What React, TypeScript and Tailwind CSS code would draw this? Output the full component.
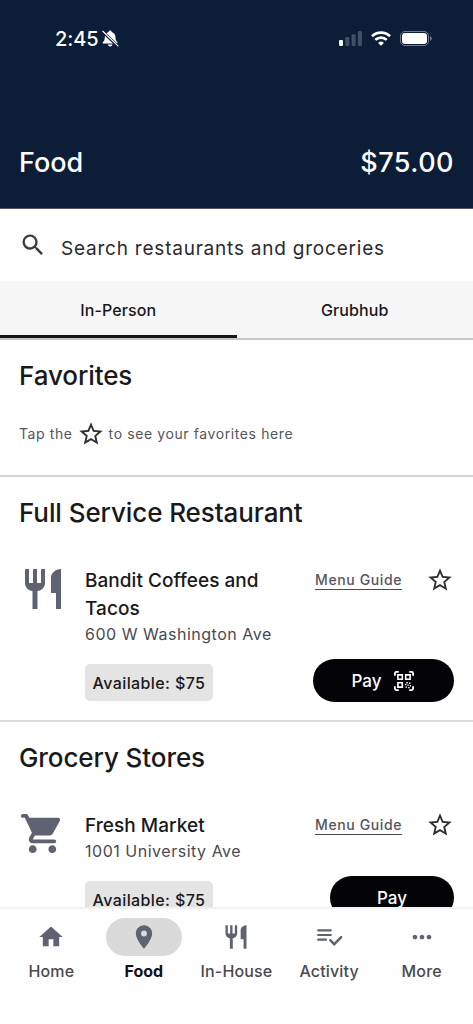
import type { ReactNode } from "react";
import {
  MdHome,
  MdMoreHoriz,
  MdPlace,
  MdRestaurant,
  MdSearch,
  MdStarBorder,
} from "react-icons/md";

interface Venue {
  name: string;
  address: string;
  available: string;
  icon: ReactNode;
  scanToPay?: boolean;
}

interface NavItem {
  label: string;
  icon: ReactNode;
  active?: boolean;
}

function CartIcon() {
  return (
    <svg viewBox="0 0 24 24" fill="currentColor" className="size-[47px]">
      <path d="M7 18c-1.1 0-1.99.9-1.99 2S5.9 22 7 22s2-.9 2-2-.9-2-2-2M1 3c0 .55.45 1 1 1h1l3.6 7.59-1.35 2.44C4.52 15.37 5.48 17 7 17h11c.55 0 1-.45 1-1s-.45-1-1-1H7l1.1-2h7.45c.75 0 1.41-.41 1.75-1.03l3.58-6.49c.37-.66-.11-1.48-.87-1.48H5.21l-.67-1.43c-.16-.35-.52-.57-.9-.57H2c-.55 0-1 .45-1 1m16 15c-1.1 0-1.99.9-1.99 2s.89 2 1.99 2 2-.9 2-2-.9-2-2-2" />
    </svg>
  );
}

function QrIcon() {
  return (
    <svg viewBox="0 0 20 20" fill="none" stroke="currentColor" className="size-5">
      <path
        d="M.9 4.8V2.4A1.5 1.5 0 0 1 2.4.9h2.4M15.2.9h2.4a1.5 1.5 0 0 1 1.5 1.5v2.4M.9 15.2v2.4a1.5 1.5 0 0 0 1.5 1.5h2.4M15.2 19.1h2.4a1.5 1.5 0 0 0 1.5-1.5v-2.4"
        strokeWidth="1.8"
      />
      <path d="M3.9 3.9h4.4v4.4H3.9zM11.7 3.9h4.4v4.4h-4.4zM3.9 11.7h4.4v4.4H3.9z" strokeWidth="1.6" />
      <path
        d="M12.4 11h1.4v1.4h-1.4zM15 11.5h1.4v1.4H15zM11 12.8h1.4v1.4H11zM13.4 13.4h1.4v1.4h-1.4zM15.7 14h1.4v1.4h-1.4zM11.5 15.4h1.4v1.4h-1.4zM14.2 15.9h1.4v1.4h-1.4z"
        fill="currentColor"
        stroke="none"
      />
    </svg>
  );
}

function ActivityIcon() {
  return (
    <svg viewBox="0 0 28 28" fill="none" stroke="currentColor" strokeWidth="2.2" strokeLinecap="round" className="size-7">
      <path d="M3.2 7.3h12.6M3.2 12h12.6M3.2 16.7h7.8" />
      <path d="m15.2 17.2 4 4 7-7" strokeWidth="2.4" />
    </svg>
  );
}

function BellOffIcon() {
  return (
    <svg viewBox="0 0 18 18" fill="currentColor" className="ml-1 size-[17px]">
      <path d="M8.6.6c.9 0 1.5.6 1.6 1.4 2.5.6 3.9 2.5 4 5.1.1 3.1.6 4.1 1.9 5.5.7.8.4 1.7-.7 1.7H1.8c-1.1 0-1.5-.9-.7-1.7C2.5 11.2 3 10.2 3 7.1c.1-2.6 1.5-4.5 4-5.1C7.1 1.2 7.7.6 8.6.6z" />
      <path d="M6.3 15.3H11c-.2 1.3-1.1 2.1-2.3 2.1s-2.2-.8-2.4-2.1z" />
      <path d="m.2 1.2 16.9 16.2" stroke="#0c1d38" strokeWidth="3" />
      <path d="m.9 1.3 16 15.5" stroke="currentColor" strokeWidth="1.2" strokeLinecap="round" />
    </svg>
  );
}

function SignalIcon() {
  return (
    <svg viewBox="0 0 23 15" fill="currentColor" className="h-[15px] w-[23px]">
      <rect x="0" y="9" width="4" height="6" rx="1.2" />
      <g opacity=".22">
        <rect x="6.3" y="6" width="4" height="9" rx="1.2" />
        <rect x="12.6" y="3.2" width="4" height="11.8" rx="1.2" />
        <rect x="18.9" y="0" width="4" height="15" rx="1.2" />
      </g>
    </svg>
  );
}

function WifiIcon() {
  return (
    <svg viewBox="0 0 20 15" fill="none" stroke="currentColor" strokeWidth="2.7" className="h-[15px] w-5">
      <path d="M1 5.3a12.8 12.8 0 0 1 18 0" />
      <path d="M4.3 8.9a8.1 8.1 0 0 1 11.4 0" />
      <path d="m10 14.8-2.9-2.9a4.1 4.1 0 0 1 5.8 0z" fill="currentColor" stroke="none" />
    </svg>
  );
}

function BatteryIcon() {
  return (
    <svg viewBox="0 0 32 15" fill="none" className="h-[15px] w-8">
      <rect x=".5" y=".5" width="28" height="14" rx="4.5" stroke="#fff" strokeOpacity=".42" />
      <rect x="2" y="2" width="25" height="11" rx="3.2" fill="#fff" />
      <path d="M30 5c1 .4 1.7 1.3 1.7 2.5S31 9.6 30 10z" fill="#fff" fillOpacity=".45" />
    </svg>
  );
}

const fullService: Venue = {
  name: "Bandit Coffees and Tacos",
  address: "600 W Washington Ave",
  available: "$75",
  icon: <MdRestaurant className="size-12" />,
  scanToPay: true,
};

const grocery: Venue = {
  name: "Fresh Market",
  address: "1001 University Ave",
  available: "$75",
  icon: <CartIcon />,
};

const navItems: NavItem[] = [
  { label: "Home", icon: <MdHome className="size-7" /> },
  { label: "Food", icon: <MdPlace className="size-7" />, active: true },
  { label: "In-House", icon: <MdRestaurant className="size-7" /> },
  { label: "Activity", icon: <ActivityIcon /> },
  { label: "More", icon: <MdMoreHoriz className="size-7" /> },
];

function SectionTitle({ children }: { children: ReactNode }) {
  return (
    <h2 className="text-[26px] leading-8 font-medium tracking-[-0.09px] text-[#19191b]">
      {children}
    </h2>
  );
}

function VenueRow({ venue }: { venue: Venue }) {
  return (
    <div className="flex">
      <div className="w-[66px] shrink-0 pt-px text-[#5f6270]">{venue.icon}</div>
      <div className="w-[210px] shrink-0 pt-[3px] pb-px">
        <h3 className="text-[19px] leading-7 font-medium tracking-[0.04px] text-[#19191b]">
          {venue.name}
        </h3>
        <p className="text-base leading-[23px] tracking-[0.52px] whitespace-nowrap text-[#4a4a50]">
          {venue.address}
        </p>
        <div className="mt-[18px] flex h-[37px] w-[128px] items-center justify-center rounded-[5px] bg-[#e4e4e4] text-base font-medium tracking-[0.4px] whitespace-nowrap text-[#19191b]">
          Available: {venue.available}
        </div>
      </div>
      <div className="flex flex-1 flex-col items-end justify-between">
        <div className="flex w-full items-center justify-between pt-0.5 pl-5">
          <a className="border-b border-[#4a4a55] text-sm leading-[18px] font-medium tracking-[0.62px] whitespace-nowrap text-[#55555e]">
            Menu Guide
          </a>
          <MdStarBorder className="size-7 text-[#303034]" />
        </div>
        <button
          className={
            venue.scanToPay
              ? "flex h-[43px] w-[141px] items-center justify-center gap-3 rounded-full bg-[#040408] pr-0.5 text-[17px] font-medium text-white"
              : "flex h-[43px] w-[124px] items-center justify-center rounded-full bg-[#040408] text-[17px] font-medium text-white"
          }
        >
          <span className="pt-0.5">Pay</span>
          {venue.scanToPay && <QrIcon />}
        </button>
      </div>
    </div>
  );
}

export default function App() {
  return (
    <div className="flex h-[1024px] w-[473px] flex-col overflow-hidden bg-white font-[Inter,sans-serif]">
      <header className="flex h-[209px] shrink-0 flex-col justify-between border-b border-[#555870] bg-[#0c1d38] text-white">
        <div className="flex items-center justify-between pt-6 pr-[41px] pl-[55px]">
          <div className="flex items-center">
            <span className="pt-px text-xl leading-7 font-medium tracking-[-0.1px]">2:45</span>
            <BellOffIcon />
          </div>
          <div className="flex items-center">
            <SignalIcon />
            <span className="ml-[9px]"><WifiIcon /></span>
            <span className="ml-[9px]"><BatteryIcon /></span>
          </div>
        </div>
        <div className="flex items-center justify-between px-[19px] pb-[27px] text-[27px] leading-9 font-medium">
          <h1>Food</h1>
          <span className="tracking-[0.45px]">$75.00</span>
        </div>
      </header>

      <div className="flex h-[72px] shrink-0 items-center pl-[19px]">
        <MdSearch className="size-7 text-[#3a3a3e]" />
        <span className="ml-[14px] pt-[9px] text-[19px] tracking-[0.78px] whitespace-nowrap text-[#2a2a30]">
          Search restaurants and groceries
        </span>
      </div>

      <div className="flex h-[59px] shrink-0 border-b-2 border-[#c9c5cc] bg-[#f7f7f7] text-base font-medium tracking-[0.12px] text-[#19191b]">
        <button className="flex-1 border-b-[3px] border-[#141816] pt-[3px]">In-Person</button>
        <button className="flex-1 border-b-[3px] border-transparent pt-[3px]">Grubhub</button>
      </div>

      <main className="min-h-0 flex-1 overflow-hidden">
        <section className="h-[137px] border-b-2 border-[#d5d4dc] px-[19px] pt-5">
          <SectionTitle>Favorites</SectionTitle>
          <div className="mt-7 flex items-center text-sm tracking-[0.6px] whitespace-nowrap text-[#55555c]">
            <span>Tap the</span>
            <MdStarBorder className="mx-1 size-7 text-[#303034]" />
            <span>to see your favorites here</span>
          </div>
        </section>

        <section className="h-[245px] border-b-2 border-[#dadae1] px-[19px] pt-5">
          <SectionTitle>Full Service Restaurant</SectionTitle>
          <div className="mt-[35px]">
            <VenueRow venue={fullService} />
          </div>
        </section>

        <section className="px-[19px] pt-5">
          <SectionTitle>Grocery Stores</SectionTitle>
          <div className="mt-[35px]">
            <VenueRow venue={grocery} />
          </div>
        </section>
      </main>

      <nav className="flex h-[117px] shrink-0 border-t-2 border-[#f1f1f2] bg-[#fefefe] px-[5px] pt-[9px]">
        {navItems.map((item) => (
          <a key={item.label} className="flex flex-1 flex-col items-center">
            <span
              className={
                item.active
                  ? "flex h-[38px] w-[76px] items-center justify-center rounded-full bg-[#dadada] text-[#5f6270]"
                  : "flex h-[38px] w-[76px] items-center justify-center text-[#5f6270]"
              }
            >
              {item.icon}
            </span>
            <span
              className={
                item.active
                  ? "mt-[3px] text-base leading-6 font-bold text-[#111113]"
                  : "mt-[3px] text-base leading-6 font-medium tracking-[0.15px] text-[#4a4a50]"
              }
            >
              {item.label}
            </span>
          </a>
        ))}
      </nav>
    </div>
  );
}
